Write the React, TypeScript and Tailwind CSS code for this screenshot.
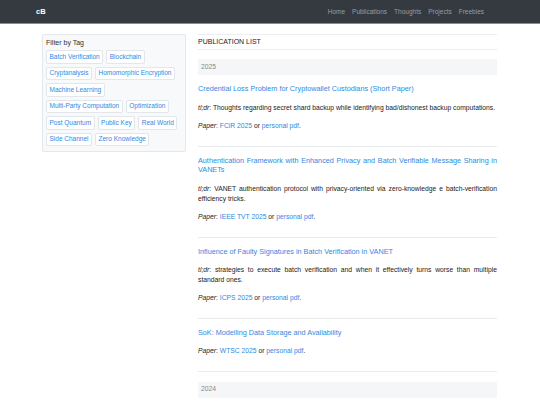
import React from "react";

const tags = [
  ["Batch Verification", "Blockchain"],
  ["Cryptanalysis", "Homomorphic Encryption"],
  ["Machine Learning"],
  ["Multi-Party Computation", "Optimization"],
  ["Post Quantum", "Public Key", "Real World"],
  ["Side Channel", "Zero Knowledge"],
];

type Pub = { title: string; tldr?: string; venue: string };

const pubs2025: Pub[] = [
  {
    title: "Credential Loss Problem for Cryptowallet Custodians (Short Paper)",
    tldr: "Thoughts regarding secret shard backup while identifying bad/dishonest backup computations.",
    venue: "FCiR 2025",
  },
  {
    title:
      "Authentication Framework with Enhanced Privacy and Batch Verifiable Message Sharing in VANETs",
    tldr: "VANET authentication protocol with privacy-oriented via zero-knowledge e batch-verification efficiency tricks.",
    venue: "IEEE TVT 2025",
  },
  {
    title: "Influence of Faulty Signatures in Batch Verification in VANET",
    tldr: "strategies to execute batch verification and when it effectively turns worse than multiple standard ones.",
    venue: "ICPS 2025",
  },
  {
    title: "SoK: Modelling Data Storage and Availability",
    venue: "WTSC 2025",
  },
];

function PubItem({ pub }: { pub: Pub }) {
  return (
    <div className="pt-[9px] pb-[15px] border-b border-[#e9ecef] text-justify">
      <a href="#" className="block text-[#2f89e3] text-[7.25px] leading-[9.5px]">
        {pub.title}
      </a>
      {pub.tldr && (
        <p className="mt-[9px] text-[6.75px] leading-[10px] text-[#222]">
          <i>tl;dr</i>: {pub.tldr}
        </p>
      )}
      <p className="mt-[8px] text-[6.75px] leading-[10px] text-[#222]">
        <i>Paper</i>: <a href="#" className="text-[#2f89e3]">{pub.venue}</a> or{" "}
        <a href="#" className="text-[#2f89e3]">personal pdf</a>.
      </p>
    </div>
  );
}

export default function App() {
  return (
    <div className="min-h-[405px] bg-white font-['Liberation_Sans',Arial,sans-serif]">
      <nav className="h-[24px] bg-[#343a40] border-b border-[#8a8d90] flex items-center justify-between pl-[36px] pr-[56px]">
        <span className="text-white text-[7.5px] font-bold">cB</span>
        <div className="flex gap-[7px] text-[6.5px] text-[#9a9da1]">
          <a href="#">Home</a>
          <a href="#">Publications</a>
          <a href="#">Thoughts</a>
          <a href="#">Projects</a>
          <a href="#">Freebies</a>
        </div>
      </nav>

      <div className="w-[455px] ml-[42px] mt-[10px] flex gap-[12px] items-start">
        <aside className="w-[144px] bg-[#f8f9fa] border border-[#e5e7ea] rounded-[2px] px-[3px] pt-[3px] pb-[5px]">
          <div className="text-[7px] leading-[10px] text-[#333] mb-[2px]">Filter by Tag</div>
          <div className="flex flex-col gap-[3px]">
            {tags.map((row, i) => (
              <div key={i} className="flex gap-[3px]">
                {row.map((t) => (
                  <span
                    key={t}
                    className="h-[13.5px] flex items-center px-[2.5px] bg-white border border-[#e3e6ea] rounded-[2px] text-[6.5px] text-[#2f89e3] whitespace-nowrap"
                  >
                    {t}
                  </span>
                ))}
              </div>
            ))}
          </div>
        </aside>

        <main className="w-[299px]">
          <div className="border-t border-b border-[#eceef0] h-[16px] flex items-center text-[7px] text-[#222]">
            PUBLICATION LIST
          </div>
          <div className="mt-[9px] h-[16px] bg-[#f5f6f7] flex items-center pl-[3px] text-[6.75px] text-[#888]">
            2025
          </div>
          {pubs2025.map((p) => (
            <PubItem key={p.title} pub={p} />
          ))}
          <div className="mt-[10px] h-[16px] bg-[#f5f6f7] flex items-center pl-[3px] text-[6.75px] text-[#888]">
            2024
          </div>
        </main>
      </div>
    </div>
  );
}
